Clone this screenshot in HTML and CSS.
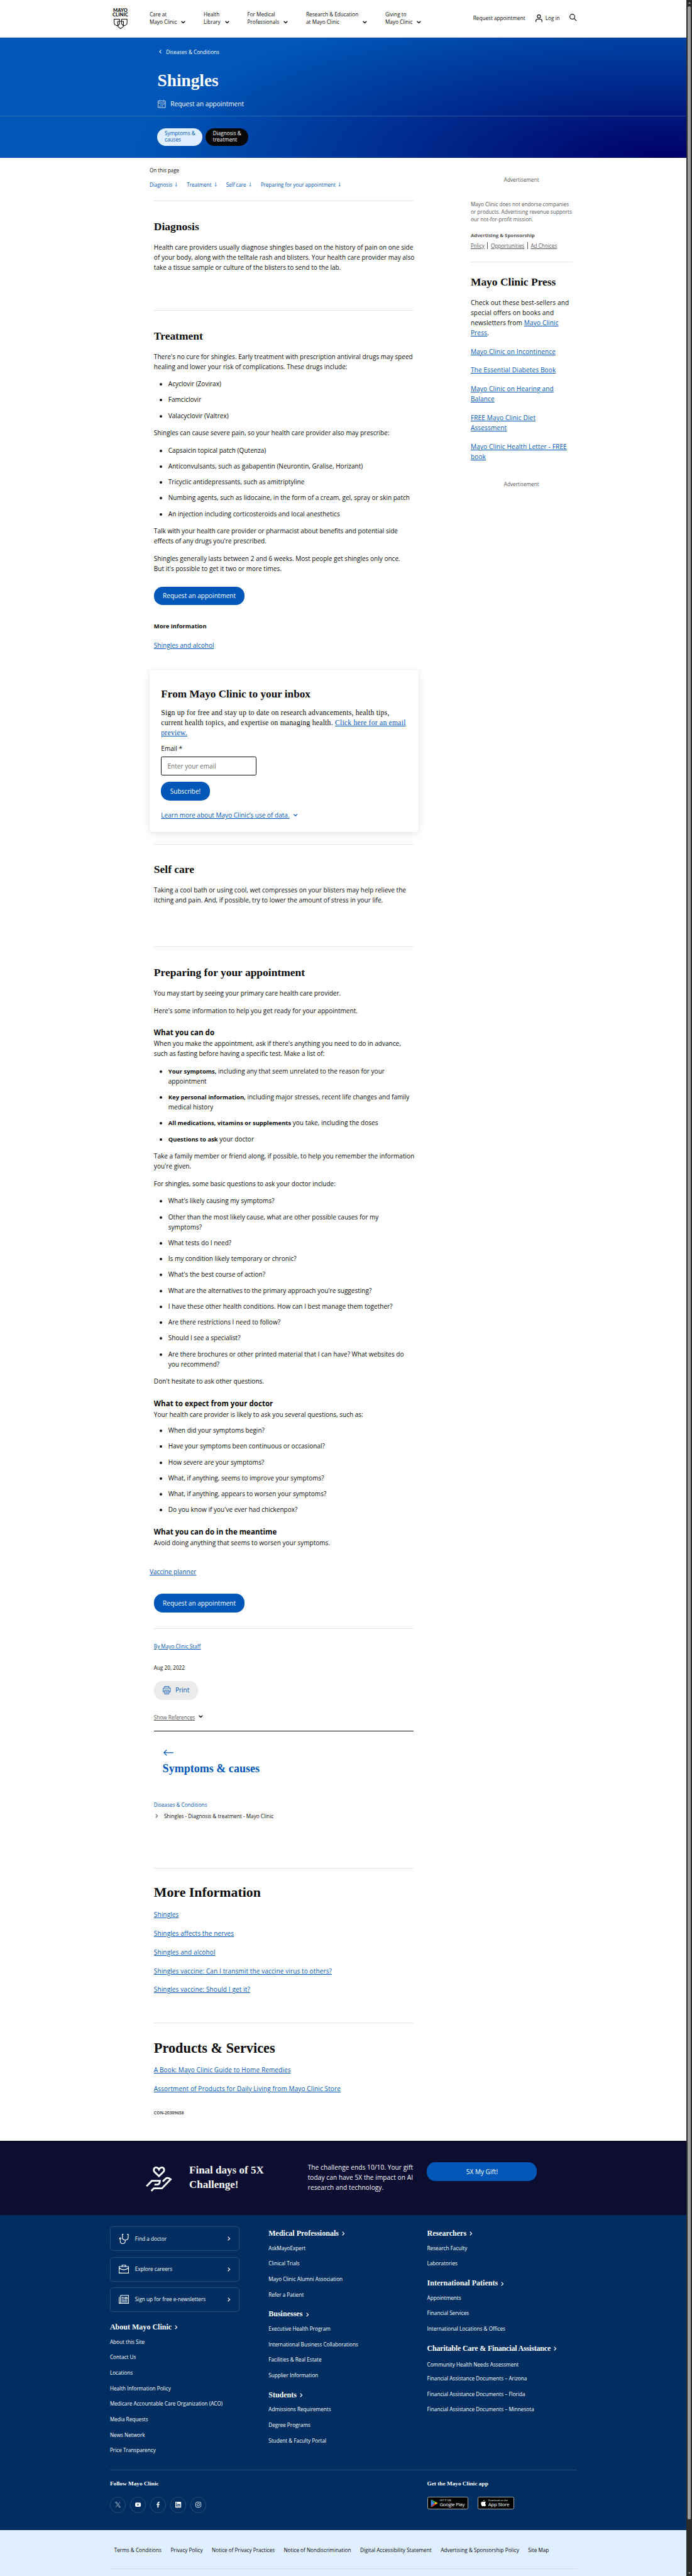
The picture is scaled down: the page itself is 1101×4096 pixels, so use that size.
FILE: index.html
```html
<!DOCTYPE html>
<html lang="en">
<head>
<meta charset="utf-8">
<title>Shingles - Diagnosis &amp; treatment - Mayo Clinic</title>
<link rel="stylesheet" href="styles.css">
</head>
<body>
<svg class="defs" aria-hidden="true">
  <symbol id="down" viewBox="0 0 12 8"><path d="M1 1.2 6 6.2 11 1.2" fill="none" stroke="currentColor" stroke-width="2.4"/></symbol>
  <symbol id="right" viewBox="0 0 8 12"><path d="M1.2 1 6.2 6 1.2 11" fill="none" stroke="currentColor" stroke-width="2.1"/></symbol>
  <symbol id="arrow" viewBox="0 0 8 12"><path d="M4 0V11M1 8 4 11 7 8" fill="none" stroke="currentColor" stroke-width="1.1"/></symbol>
</svg>
<div class="page">
  <div class="view">
    <header class="top">
      <a class="logo">
        <span>MAYO</span><span>CLINIC</span>
        <svg viewBox="0 0 38 28" fill="none" stroke="currentColor" stroke-width="1.8"><path d="M1 1h15v11c0 4-4 6-7 7-4-1-8-4-8-9zM22 1h15v9c0 5-4 8-8 9-3-1-7-3-7-7z"/><path d="M11 7h16v11c0 4-4 7-8 9-4-2-8-5-8-9z"/></svg>
      </a>
      <nav class="menu">
        <a><span>Care at<br>Mayo Clinic</span><svg><use href="#down"/></svg></a>
        <a><span>Health<br>Library</span><svg><use href="#down"/></svg></a>
        <a><span>For Medical<br>Professionals</span><svg><use href="#down"/></svg></a>
        <a><span>Research &amp; Education<br>at Mayo Clinic</span><svg><use href="#down"/></svg></a>
        <a><span>Giving to<br>Mayo Clinic</span><svg><use href="#down"/></svg></a>
      </nav>
      <div class="tools">
        <a class="req">Request appointment</a>
        <svg class="person" viewBox="0 0 19 21" fill="none" stroke="currentColor" stroke-width="2"><circle cx="9.5" cy="5.5" r="4.4"/><path d="M1.2 21v-3.5c0-3 1.500-4.500 4.500-4.500h7.600c3 0 4.500 1.500 4.500 4.500V21"/></svg>
        <a>Log in</a>
        <svg class="search" viewBox="0 0 20 20" fill="none" stroke="currentColor" stroke-width="2"><circle cx="8" cy="8" r="6.800"/><path d="m13 13 6.300 6.300"/></svg>
      </div>
    </header>

    <section class="hero">
      <div class="hero-main">
        <a class="crumb"><svg><use href="#right"/></svg>Diseases &amp; Conditions</a>
        <h1>Shingles</h1>
        <a class="appt"><svg viewBox="0 0 22 22" fill="none" stroke="currentColor" stroke-width="1.400"><path d="M5 2.500H1v18.500h20V2.500h-3M8 2.500h7M6 0v5M16.500 0v5M1 8.500h20"/><path d="M8 13h2M12 13h2M16 13h2M4 17h2M8 17h2M12 17h2" stroke-width="2"/></svg>Request an appointment</a>
      </div>
      <div class="hero-tabs">
        <a class="chip light">Symptoms &amp;<br>causes</a>
        <a class="chip dark">Diagnosis &amp;<br>treatment</a>
      </div>
    </section>

    <div class="content">
      <main>
        <div class="otp">On this page</div>
        <nav class="jump">
          <a>Diagnosis<svg><use href="#arrow"/></svg></a>
          <a>Treatment<svg><use href="#arrow"/></svg></a>
          <a>Self care<svg><use href="#arrow"/></svg></a>
          <a>Preparing for your appointment<svg><use href="#arrow"/></svg></a>
        </nav>

        <section class="block diag">
          <h2>Diagnosis</h2>
          <p>Health care providers usually diagnose shingles based on the history of pain on one side<br>of your body, along with the telltale rash and blisters. Your health care provider may also<br>take a tissue sample or culture of the blisters to send to the lab.</p>
        </section>

        <section class="block treat">
          <h2>Treatment</h2>
          <p>There's no cure for shingles. Early treatment with prescription antiviral drugs may speed<br>healing and lower your risk of complications. These drugs include:</p>
          <ul>
            <li>Acyclovir (Zovirax)</li>
            <li>Famciclovir</li>
            <li>Valacyclovir (Valtrex)</li>
          </ul>
          <p>Shingles can cause severe pain, so your health care provider also may prescribe:</p>
          <ul>
            <li>Capsaicin topical patch (Qutenza)</li>
            <li>Anticonvulsants, such as gabapentin (Neurontin, Gralise, Horizant)</li>
            <li>Tricyclic antidepressants, such as amitriptyline</li>
            <li>Numbing agents, such as lidocaine, in the form of a cream, gel, spray or skin patch</li>
            <li>An injection including corticosteroids and local anesthetics</li>
          </ul>
          <p>Talk with your health care provider or pharmacist about benefits and potential side<br>effects of any drugs you're prescribed.</p>
          <p>Shingles generally lasts between 2 and 6 weeks. Most people get shingles only once.<br>But it's possible to get it two or more times.</p>
          <a class="btn">Request an appointment</a>
          <h4>More Information</h4>
          <a class="link">Shingles and alcohol</a>
        </section>

        <section class="card">
          <h2>From Mayo Clinic to your inbox</h2>
          <p class="serif">Sign up for free and stay up to date on research advancements, health tips,<br>current health topics, and expertise on managing health. <a>Click here for an email</a><br><a>preview.</a></p>
          <label>Email *</label>
          <div class="field">Enter your email</div>
          <a class="btn">Subscribe!</a>
          <div class="learn"><a class="link">Learn more about Mayo Clinic’s use of data.</a><svg><use href="#down"/></svg></div>
        </section>

        <section class="block self">
          <h2>Self care</h2>
          <p>Taking a cool bath or using cool, wet compresses on your blisters may help relieve the<br>itching and pain. And, if possible, try to lower the amount of stress in your life.</p>
        </section>

        <section class="block prep">
          <h2>Preparing for your appointment</h2>
          <p>You may start by seeing your primary care health care provider.</p>
          <p>Here's some information to help you get ready for your appointment.</p>
          <h3>What you can do</h3>
          <p>When you make the appointment, ask if there's anything you need to do in advance,<br>such as fasting before having a specific test. Make a list of:</p>
          <ul>
            <li><strong>Your symptoms,</strong> including any that seem unrelated to the reason for your<br>appointment</li>
            <li><strong>Key personal information,</strong> including major stresses, recent life changes and family<br>medical history</li>
            <li><strong>All medications, vitamins or supplements</strong> you take, including the doses</li>
            <li><strong>Questions to ask</strong> your doctor</li>
          </ul>
          <p>Take a family member or friend along, if possible, to help you remember the information<br>you're given.</p>
          <p>For shingles, some basic questions to ask your doctor include:</p>
          <ul>
            <li>What's likely causing my symptoms?</li>
            <li>Other than the most likely cause, what are other possible causes for my<br>symptoms?</li>
            <li>What tests do I need?</li>
            <li>Is my condition likely temporary or chronic?</li>
            <li>What's the best course of action?</li>
            <li>What are the alternatives to the primary approach you're suggesting?</li>
            <li>I have these other health conditions. How can I best manage them together?</li>
            <li>Are there restrictions I need to follow?</li>
            <li>Should I see a specialist?</li>
            <li>Are there brochures or other printed material that I can have? What websites do<br>you recommend?</li>
          </ul>
          <p>Don't hesitate to ask other questions.</p>
          <h3>What to expect from your doctor</h3>
          <p class="tight">Your health care provider is likely to ask you several questions, such as:</p>
          <ul>
            <li>When did your symptoms begin?</li>
            <li>Have your symptoms been continuous or occasional?</li>
            <li>How severe are your symptoms?</li>
            <li>What, if anything, seems to improve your symptoms?</li>
            <li>What, if anything, appears to worsen your symptoms?</li>
            <li>Do you know if you've ever had chickenpox?</li>
          </ul>
          <h3>What you can do in the meantime</h3>
          <p>Avoid doing anything that seems to worsen your symptoms.</p>
          <a class="link planner">Vaccine planner</a>
          <a class="btn">Request an appointment</a>
        </section>

        <section class="block meta">
          <a class="small-link">By Mayo Clinic Staff</a>
          <div class="date">Aug 20, 2022</div>
          <a class="btn print"><svg viewBox="0 0 22 23" fill="none" stroke="currentColor" stroke-width="1.500"><path d="M5 5V1h12v4M5 16H1V5.500h20V16h-4"/><path d="M5 11h12v11H5zM7.500 14.500h7M7.500 18.500h7"/></svg>Print</a>
          <div class="refs"><a>Show References</a><svg><use href="#down"/></svg></div>
        </section>

        <section class="prev">
          <svg viewBox="0 0 28 17" fill="none" stroke="currentColor" stroke-width="2.100"><path d="M1.500 8.500H28M9 .8 1.500 8.500 9 16.200"/></svg>
          <h2>Symptoms &amp; causes</h2>
        </section>

        <nav class="trail">
          <a>Diseases &amp; Conditions</a>
          <div><svg><use href="#right"/></svg>Shingles - Diagnosis &amp; treatment - Mayo Clinic</div>
        </nav>

        <section class="block more">
          <h2>More Information</h2>
          <a class="link">Shingles</a>
          <a class="link">Shingles affects the nerves</a>
          <a class="link">Shingles and alcohol</a>
          <a class="link">Shingles vaccine: Can I transmit the vaccine virus to others?</a>
          <a class="link">Shingles vaccine: Should I get it?</a>
        </section>

        <section class="block more products">
          <h2>Products &amp; Services</h2>
          <a class="link">A Book: Mayo Clinic Guide to Home Remedies</a>
          <a class="link">Assortment of Products for Daily Living from Mayo Clinic Store</a>
          <div class="con">CON-20309658</div>
        </section>
      </main>

      <aside>
        <div class="ad">Advertisement</div>
        <div class="note">Mayo Clinic does not endorse companies<br>or products. Advertising revenue supports<br>our not-for-profit mission.</div>
        <div class="spons">Advertising &amp; Sponsorship</div>
        <div class="policy"><a>Policy</a><i></i><a>Opportunities</a><i></i><a>Ad Choices</a></div>
        <section class="press">
          <h2>Mayo Clinic Press</h2>
          <p>Check out these best-sellers and<br>special offers on books and<br>newsletters from <a>Mayo Clinic</a><br><a>Press</a>.</p>
          <a class="link">Mayo Clinic on Incontinence</a>
          <a class="link">The Essential Diabetes Book</a>
          <a class="link">Mayo Clinic on Hearing and<br>Balance</a>
          <a class="link">FREE Mayo Clinic Diet<br>Assessment</a>
          <a class="link">Mayo Clinic Health Letter - FREE<br>book</a>
        </section>
        <div class="ad second">Advertisement</div>
      </aside>
    </div>

    <section class="banner">
      <svg viewBox="0 0 72 70" fill="none" stroke="currentColor" stroke-width="5"><path d="M36.500 26.500 24.500 15c-4.500-4.500-2-12.500 3.500-12.500 4 0 7 2.500 8.500 5.500 1.500-3 4.500-5.500 8.500-5.500 5.500 0 8 8 3.500 12.500z"/><path d="M2 54.500 16.500 39.500H39c0 6.500-3 10.500-9 10.500h-6M15 67.500 22 60.500H44.500L69 35.500C64 31 58 30 54.500 34L47 41.500"/></svg>
      <h2>Final days of 5X<br>Challenge!</h2>
      <p>The challenge ends 10/10. Your gift<br>today can have 5X the impact on AI<br>research and technology.</p>
      <a class="btn">5X My Gift!</a>
    </section>

    <footer>
      <div class="cols">
        <div class="col">
          <a class="tile"><svg viewBox="0 0 28 28" fill="none" stroke="currentColor" stroke-width="2"><path d="M13 1h-3v9c0 5 3 7 8 7s8-2 8-7V1h-3M18 17v2c0 5-3 8-7.500 8S4 24 4 19v-2"/><circle cx="4" cy="13" r="2"/></svg>Find a doctor<svg class="go"><use href="#right"/></svg></a>
          <a class="tile"><svg viewBox="0 0 28 28" fill="none" stroke="currentColor" stroke-width="2"><path d="M1 7h26v18H1zM9 7V3h10v4M1 11c8 6 18 6 26 0"/></svg>Explore careers<svg class="go"><use href="#right"/></svg></a>
          <a class="tile"><svg viewBox="0 0 28 28" fill="none" stroke="currentColor" stroke-width="2"><path d="M5 3h22v22H1V8M5 3v22M8 9h6M8 13h6M8 17h16M8 21h16M17 9h6v4h-6z"/></svg>Sign up for free e-newsletters<svg class="go"><use href="#right"/></svg></a>
          <h3>About Mayo Clinic<svg><use href="#right"/></svg></h3>
          <a>About this Site</a><a>Contact Us</a><a>Locations</a><a>Health Information Policy</a><a>Medicare Accountable Care Organization (ACO)</a><a>Media Requests</a><a>News Network</a><a>Price Transparency</a>
        </div>
        <div class="col">
          <h3>Medical Professionals<svg><use href="#right"/></svg></h3>
          <a>AskMayoExpert</a><a>Clinical Trials</a><a>Mayo Clinic Alumni Association</a><a>Refer a Patient</a>
          <h3>Businesses<svg><use href="#right"/></svg></h3>
          <a>Executive Health Program</a><a>International Business Collaborations</a><a>Facilities &amp; Real Estate</a><a>Supplier Information</a>
          <h3>Students<svg><use href="#right"/></svg></h3>
          <a>Admissions Requirements</a><a>Degree Programs</a><a>Student &amp; Faculty Portal</a>
        </div>
        <div class="col">
          <h3>Researchers<svg><use href="#right"/></svg></h3>
          <a>Research Faculty</a><a>Laboratories</a>
          <h3>International Patients<svg><use href="#right"/></svg></h3>
          <a>Appointments</a><a>Financial Services</a><a>International Locations &amp; Offices</a>
          <h3 class="long">Charitable Care &amp; Financial Assistance<svg><use href="#right"/></svg></h3>
          <a class="community">Community Health Needs Assessment</a><a>Financial Assistance Documents – Arizona</a><a>Financial Assistance Documents – Florida</a><a>Financial Assistance Documents – Minnesota</a>
        </div>
      </div>
      <div class="follow">
        <div>
          <h4>Follow Mayo Clinic</h4>
          <div class="social">
            <span><svg viewBox="0 0 16 16" fill="none" stroke="currentColor"><path d="M1 .8h3.500L15 15.200h-3.500zM14 .5 9 6.700M7 9.200 1.500 15.500"/></svg></span>
            <span><svg viewBox="0 0 16 16"><path fill="currentColor" fill-rule="evenodd" d="M2 2.500c4-.6 8-.6 12 0 1.500.3 2 1.500 2 5.500s-.5 5.200-2 5.500c-4 .6-8 .6-12 0C.5 13.200 0 12 0 8s.5-5.200 2-5.500zM6.300 5.300v5.400L10.800 8z"/></svg></span>
            <span><svg viewBox="0 0 16 16"><path fill="currentColor" d="M6 16V9H4V6h2V4.500C6 1.500 7.500 0 10 0h2v2.800h-1.300C9.500 2.800 9.200 3.300 9.200 4.300V6H12l-.4 3H9.200v7z"/></svg></span>
            <span><svg viewBox="0 0 16 16"><path fill="currentColor" fill-rule="evenodd" d="M0 0h16v16H0zM2.400 6.200v7.300h2.300V6.200zM2.200 2.300v2.300h2.600V2.300zM6.300 6.200v7.300h2.300V9.700c0-2.200 2.600-2.200 2.600 0v3.800h2.300V9c0-3.600-3.700-3.600-4.900-1.800v-1z"/></svg></span>
            <span><svg viewBox="0 0 16 16" fill="none" stroke="currentColor" stroke-width="1.500"><rect x=".8" y=".8" width="14.400" height="14.400" rx="4"/><circle cx="8" cy="8" r="3.400"/><path d="M11.800 4h1"/></svg></span>
          </div>
        </div>
        <div class="apps">
          <h4>Get the Mayo Clinic app</h4>
          <div class="stores">
            <span class="store play"><svg viewBox="0 0 20 22"><path fill="#4285f4" d="M1 1v20L11 11z"/><path fill="#34a853" d="M1 1 11 11 14.500 7.500 3 .8z"/><path fill="#ea4335" d="M1 21 11 11l3.500 3.500L3 21.200z"/><path fill="#fbbc04" d="M14.500 7.500 11 11l3.500 3.500L20 11z"/></svg><b><small>GET IT ON</small>Google Play</b></span>
            <span class="store apple"><svg viewBox="0 0 16 20"><path fill="#fff" d="M11 .5c.2 2-1.500 4-3.400 4C7.400 2.500 9.200.7 11 .5zM13 10.500c0-2 1.200-3 2-3.500-1-1.600-2.600-2-3.700-2-1.500 0-2.600.9-3.400.9S6 5 4.700 5C2.500 5.100.5 7 .5 10.500c0 4 2.800 8.500 5 8.500 1.100 0 1.500-.8 3-.8 1.400 0 1.700.8 3 .8 2 0 3.600-3.200 4-4.600-1.500-.6-2.500-2-2.500-3.900z"/></svg><b><small>Download on the</small>App Store</b></span>
          </div>
        </div>
      </div>
    </footer>

    <nav class="legal">
      <div class="legal-row"><a>Terms &amp; Conditions</a><a>Privacy Policy</a><a>Notice of Privacy Practices</a><a>Notice of Nondiscrimination</a><a>Digital Accessibility Statement</a><a>Advertising &amp; Sponsorship Policy</a><a>Site Map</a></div>
    </nav>
  </div>
  <div class="scroll"><span class="up"></span><span class="thumb"></span><span class="dn"></span></div>
</div>
</body>
</html>
```
FILE: styles.css
```css
/* 1rem is ten design pixels of the 1920-wide layout */
html { font-size: 5.7344px; }
* { box-sizing: border-box; }
body { margin: 0; background: #fff; color: #0a0a0a; font: 1.755rem/2.8rem "Open Sans", "Noto Sans", sans-serif; }
h1, h2, h3, h4, p, ul { margin: 0; }
h1, h2, .serif { font-family: "Liberation Serif", serif; }
svg { flex: none; display: block; overflow: visible; }
.defs { position: absolute; width: 0; height: 0; }

.page { display: flex; height: 4096px; overflow: hidden; white-space: nowrap; }
.view { width: 190.5rem; flex: none; display: flex; flex-direction: column; }
.scroll { flex: 1; background: #2c2c2c; display: flex; flex-direction: column; align-items: center; padding: .5rem 0; }
.scroll .thumb { width: .9rem; height: 696.8rem; margin-top: .7rem; border-radius: .45rem; background: #9e9e9e; }
.up, .dn { border: .4rem solid transparent; border-top: 0; border-bottom: .6rem solid #9e9e9e; }
.dn { margin-top: auto; transform: rotate(180deg); }

/* header */
.top { height: 10.4rem; flex: none; border-bottom: .1rem solid #ccc; display: flex; align-items: center; padding: 0 30.5rem 0 31.1rem; font-size: 1.43rem; line-height: 2.1rem; }
.logo { width: 4.6rem; display: flex; flex-direction: column; align-items: center; font: 900 1.32rem/1.28rem Lato, sans-serif; letter-spacing: .02rem; }
.logo svg { width: 3.8rem; height: 2.8rem; margin-top: .4rem; }
.menu { display: flex; gap: 5rem; margin-left: 5.8rem; }
.menu a { display: flex; align-items: flex-end; gap: 1.25rem; }
.menu svg { width: 1.2rem; height: .8rem; margin-bottom: .7rem; }
.tools { display: flex; align-items: center; margin-left: auto; }
.person { width: 1.9rem; height: 2.1rem; margin: 0 .9rem 0 2.8rem; }
.search { width: 2rem; height: 2rem; margin: -.4rem 0 0 2.7rem; }

/* hero */
.hero { height: 33.3rem; flex: none; color: #fff; background: radial-gradient(147.5rem 43.6rem at 157.5rem 33.3rem, #000066, #0057b8); background-image: radial-gradient(147.5rem 43.6rem at 184.5rem 33.3rem, #000066, #0057b8); }
.hero-main { height: 21.9rem; border-bottom: .2rem solid rgba(255, 255, 255, .18); padding: 3rem 0 0 43.7rem; }
.crumb { display: flex; align-items: center; font-size: 1.43rem; line-height: 2rem; gap: 1.3rem; padding-left: .4rem; }
.crumb svg { width: .7rem; height: 1.1rem; transform: scaleX(-1); }
.hero h1 { font-size: 4.76rem; line-height: 5.6rem; margin-top: 4.2rem; }
.appt { display: flex; align-items: center; gap: 1.4rem; margin-top: 2.15rem; font-size: 1.767rem; }
.appt svg { width: 2.2rem; height: 2.2rem; }
.hero-tabs { display: flex; gap: .8rem; padding: 3.2rem 0 0 43.6rem; }
.chip { height: 5rem; padding: .65rem 2rem 0 2.1rem; border-radius: 2.5rem; font-size: 1.43rem; line-height: 1.7rem; }
.chip.light { background: #dfefff; color: #0057b8; }
.chip.dark { background: #080808; }

/* content */
.content { height: 549.9rem; flex: none; display: flex; padding-left: 41.5rem; }
main { width: 74.6rem; padding-top: 2.6rem; }
a { color: inherit; }
.link, .serif a, .press p a { color: #0057b8; text-decoration: underline; text-decoration-thickness: .17rem; text-underline-offset: .25rem; }
.link { display: block; width: max-content; }
.otp, .jump { font-size: 1.43rem; line-height: 2rem; }
.otp { font-size: 1.4rem; }
.jump { display: flex; gap: 2.57rem; margin: 1.95rem 0 3.4rem; color: #0057b8; }
.jump a { display: flex; align-items: center; font-size: 1.4rem; }
.jump svg { width: .8rem; height: 1.2rem; margin-left: .7rem; }
.block { margin-left: 1.2rem; width: 72rem; border-top: .1rem solid #e4e4e4; padding-top: 5.2rem; }
h2 { font-size: 3.05rem; line-height: 3.6rem; margin-bottom: 2.5rem; }
p { margin-bottom: 2rem; }
ul { padding: 0 0 0 4rem; margin-bottom: 2rem; }
li { margin-bottom: 1.6rem; }
li:last-child { margin-bottom: 0; }
strong { font-size: .94em; line-height: 1; }
h3 { font-size: 2.02rem; line-height: 2.8rem; margin: 3.4rem 0 .2rem; }
p.tight { margin-bottom: 1.6rem; }
.btn { display: flex; align-items: center; justify-content: center; width: 25.2rem; height: 5.2rem; border-radius: 2.4rem; background: #0057b8; color: #fff; }
.diag { height: 30.3rem; }
.treat { height: 99.75rem; }
.treat .btn { margin-top: 3.6rem; }
h4 { font-size: 1.64rem; line-height: 2.8rem; margin: 4.45rem 0 2.4rem; }

.card { height: 44.95rem; border-radius: .8rem; background: #fff; box-shadow: 0 .4rem 2rem rgba(0, 0, 0, .11); padding: 5.05rem 0 0 3.2rem; margin-bottom: 3.3rem; }
.card h2 { font-size: 3rem; margin-bottom: 2rem; }
.card p { font-size: 2.04rem; letter-spacing: .038rem; margin-bottom: 1.42rem; }
.card label { display: block; }
.field { width: 26.4rem; height: 5.35rem; border: 1px solid #0a0a0a; border-radius: .4rem; padding: 1.2rem 1.6rem; margin: .75rem 0 1.75rem; color: #6b6b6b; }
.card .btn { width: 13.5rem; }
.learn { display: flex; align-items: center; gap: 1.1rem; margin-top: 2.67rem; color: #0057b8; }
.learn svg { width: 1.1rem; height: .8rem; }

.self { height: 28.55rem; }
.prep { height: 189.05rem; }
.planner { margin: 5.2rem 0 4.75rem -1.2rem; }

.meta { height: 28.3rem; padding-top: 3.8rem; font-size: 1.43rem; line-height: 2rem; }
.small-link { display: block; width: max-content; color: #0057b8; text-decoration: underline; }
.date { margin: 4rem 0 2.65rem; }
.print { width: 12.3rem; background: #ebebeb; color: #0057b8; font-size: 1.75rem; gap: 1.3rem; }
.print svg { width: 2.2rem; height: 2.3rem; }
.refs { display: flex; gap: 1.1rem; margin-top: 3.87rem; color: #555; }
.refs a { text-decoration: underline; }
.refs svg { width: 1.2rem; height: .8rem; margin-top: .4rem; color: #0a0a0a; }
.prev { margin-left: 1.2rem; width: 72rem; height: 19.57rem; border-top: .2rem solid #0a0a0a; padding: 5.1rem 0 0 2.4rem; color: #0057b8; }
.prev svg { width: 2.8rem; height: 1.7rem; margin: 0 0 1.8rem .2rem; }
.prev h2 { font-size: 3.15rem; }
.trail { height: 18.45rem; margin-left: 1.2rem; font-size: 1.43rem; line-height: 2rem; }
.trail a { color: #0057b8; }
.trail div { display: flex; align-items: center; gap: 1.6rem; margin-top: 1.2rem; padding-left: .4rem; }
.trail svg { width: .8rem; height: 1.2rem; color: #666; }
.more { height: 43rem; padding-top: 4.65rem; }
.more h2 { font-size: 3.81rem; line-height: 4.4rem; margin-bottom: 2.4rem; }
.more .link { margin-bottom: 2.4rem; letter-spacing: .018rem; }
.products h2 { font-size: 3.89rem; }
.con { font-size: 1.17rem; line-height: 1.6rem; font-weight: 700; color: #555; margin-top: 4.6rem; }

/* sidebar */
aside { width: 28.2rem; margin-left: 14.5rem; padding-top: 5.15rem; font-size: 1.43rem; line-height: 2rem; color: #555; }
.ad { text-align: center; }
.note { line-height: 2.05rem; margin: 4.8rem 0 2.6rem; }
.spons { font-size: 1.36rem; font-weight: 700; }
.policy { display: flex; gap: .8rem; margin: .75rem 0 3.45rem; }
.policy a { text-decoration: underline; }
.policy i { width: 1px; background: #555; }
.press { border-top: .1rem solid #e4e4e4; padding-top: 3.6rem; font-size: 1.77rem; line-height: 2.8rem; letter-spacing: .02rem; color: #0a0a0a; }
.press h2 { margin-bottom: 2.45rem; letter-spacing: 0; }
.press p, .press .link { margin-bottom: 2.4rem; }
.ad.second { margin-top: 5.17rem; }

/* giving banner */
.banner { height: 20.6rem; flex: none; background: #0d0d31; color: #fff; display: flex; align-items: flex-start; padding: 6rem 0 0 40.5rem; }
.banner svg { width: 7.2rem; height: 7rem; margin-top: 1.1rem; }
.banner h2 { width: 32.9rem; margin: .1rem 0 0 4.8rem; font-size: 2.97rem; line-height: 4.04rem; }
.banner p { width: 33.1rem; letter-spacing: .018rem; }
.banner .btn { width: 30.5rem; }

/* footer */
footer { height: 87.4rem; flex: none; background: #002e60; color: #fff; padding: 3.2rem 30.4rem 0 30.5rem; font-size: 1.43rem; line-height: 2rem; }
.cols { display: grid; grid-template-columns: 44rem 44rem 1fr; height: 67.5rem; }
.col > a { display: block; width: max-content; margin-bottom: 2.3rem; }
.col h3 { display: flex; align-items: center; gap: .9rem; font: 700 2.1rem/2.8rem "Liberation Serif", serif; margin: 2.97rem 0 1.73rem; }
.col h3:first-child { margin-top: .4rem; }
.col h3 svg { width: .8rem; height: 1.2rem; margin-top: .4rem; }
.col h3.long { letter-spacing: -.032rem; }
.col .tile { display: flex; align-items: center; width: 36rem; height: 6.8rem; border: .2rem solid #264d78; border-radius: .8rem; padding: 0 2.4rem 0 2.2rem; gap: 1.8rem; margin-bottom: 1.6rem; }
.col .tile + h3 { margin-top: 2.8rem; }
.tile svg { width: 2.8rem; height: 2.8rem; }
.tile .go { width: .8rem; height: 1.2rem; margin-left: auto; }
.col .community { padding-top: .4rem; margin-bottom: 1.9rem; }
.follow { display: grid; grid-template-columns: 88rem 1fr; border-top: .2rem solid #264d78; padding-top: 2.67rem; }
.follow h4 { font: 700 1.62rem/2rem "Liberation Serif", serif; margin: 0 0 2.65rem; }
.social { display: flex; gap: 1.2rem; }
.social span { width: 4.4rem; height: 4.4rem; border: .2rem solid #264d78; border-radius: 50%; display: grid; place-items: center; }
.social svg { width: 1.6rem; height: 1.6rem; }
.stores { display: flex; gap: 2.6rem; }
.store { height: 3.35rem; border: .1rem solid #a6a6a6; border-radius: .4rem; background: #000; display: flex; align-items: center; gap: .6rem; padding-left: .7rem; }
.play { width: 11.4rem; }
.apple { width: 10.1rem; }
.play svg { width: 2rem; height: 2.2rem; }
.apple svg { width: 1.5rem; height: 1.9rem; }
.store b { font-weight: 500; font-size: 1.37rem; line-height: 1.4rem; letter-spacing: -.05rem; }
.store small { display: block; font-size: .68rem; line-height: .8rem; letter-spacing: 0; }

/* legal links */
.legal { flex: 1; background: #dfefff; padding: 4.55rem 30.4rem 0 30.5rem; font-size: 1.43rem; line-height: 2rem; }
.legal-row { display: flex; gap: 2.53rem; padding: 0 0 4.1rem 1.2rem; border-bottom: .2rem solid #d3dce6; }
```
